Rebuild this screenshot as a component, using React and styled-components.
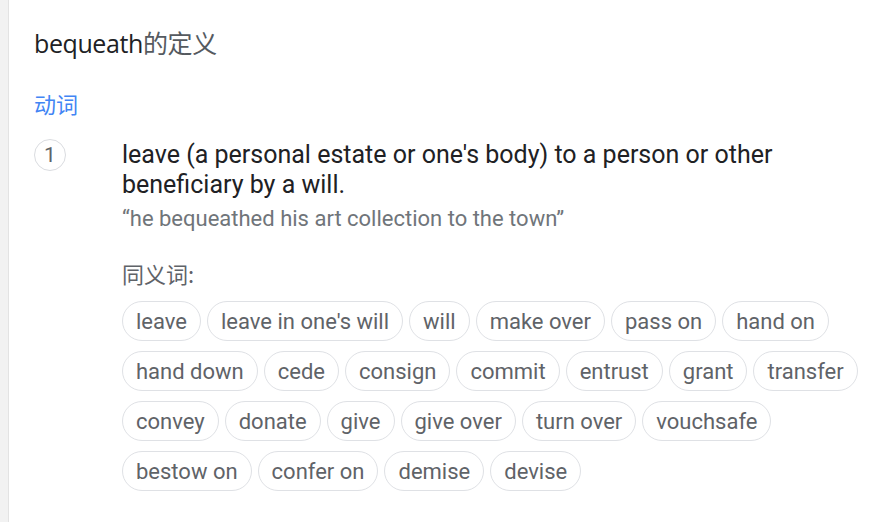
import React from 'react';
import styled, { createGlobalStyle } from 'styled-components';

const GlobalStyle = createGlobalStyle`
  html, body {
    margin: 0;
    padding: 0;
    background: #fff;
  }
  body {
    font-family: Roboto, "Noto Sans CJK SC", sans-serif;
  }
`;

const Page = styled.div`
  display: flex;
  min-height: 522px;
`;

const SideStrip = styled.div`
  width: 8px;
  flex-shrink: 0;
  background: #f2f2f2;
  border-right: 1px solid #e3e3e3;
`;

const Content = styled.div`
  flex: 1;
  padding: 28px 20px 0 25px;
`;

const Title = styled.div`
  font-family: "Open Sans", "Noto Sans CJK SC", sans-serif;
  font-size: 25px;
  line-height: 30px;
  color: #202124;
  letter-spacing: -0.4px;
  span {
    color: #555a5f;
  }
`;

const PartOfSpeech = styled.div`
  margin-top: 30px;
  font-family: "Noto Sans CJK SC", sans-serif;
  font-size: 22px;
  line-height: 30px;
  color: #4285f4;
`;

const Sense = styled.div`
  display: grid;
  grid-template-columns: 88px 1fr;
  margin-top: 21px;
`;

const Number = styled.div`
  width: 30px;
  height: 30px;
  border: 1px solid #dadce0;
  border-radius: 50%;
  display: flex;
  align-items: center;
  justify-content: center;
  font-size: 21px;
  color: #5f6368;
`;

const Body = styled.div`
  padding-top: 1px;
`;

const Definition = styled.div`
  font-size: 25px;
  line-height: 30px;
  color: #202124;
`;

const Example = styled.div`
  margin-top: 5px;
  font-size: 22px;
  line-height: 28px;
  color: #70757a;
`;

const SynLabel = styled.div`
  margin-top: 26px;
  font-family: "Noto Sans CJK SC", sans-serif;
  font-size: 22px;
  line-height: 28px;
  color: #5f6368;
`;

const Chips = styled.div`
  display: flex;
  flex-wrap: wrap;
  gap: 10px 6px;
  margin-top: 14px;
`;

const Chip = styled.div`
  height: 40px;
  box-sizing: border-box;
  padding: 0 13px;
  border: 1px solid #dfe1e5;
  border-radius: 20px;
  display: flex;
  align-items: center;
  font-size: 22px;
  color: #5f6368;
  white-space: nowrap;
`;

const SYNONYMS = [
  'leave', "leave in one's will", 'will', 'make over', 'pass on', 'hand on',
  'hand down', 'cede', 'consign', 'commit', 'entrust', 'grant', 'transfer',
  'convey', 'donate', 'give', 'give over', 'turn over', 'vouchsafe',
  'bestow on', 'confer on', 'demise', 'devise',
];

export default function App() {
  return (
    <Page>
      <GlobalStyle />
      <SideStrip />
      <Content>
        <Title>bequeath<span>的定义</span></Title>
        <PartOfSpeech>动词</PartOfSpeech>
        <Sense>
          <Number>1</Number>
          <Body>
            <Definition>
              leave (a personal estate or one's body) to a person or other beneficiary by a will.
            </Definition>
            <Example>“he bequeathed his art collection to the town”</Example>
            <SynLabel>同义词:</SynLabel>
            <Chips>
              {SYNONYMS.map(s => <Chip key={s}>{s}</Chip>)}
            </Chips>
          </Body>
        </Sense>
      </Content>
    </Page>
  );
}
